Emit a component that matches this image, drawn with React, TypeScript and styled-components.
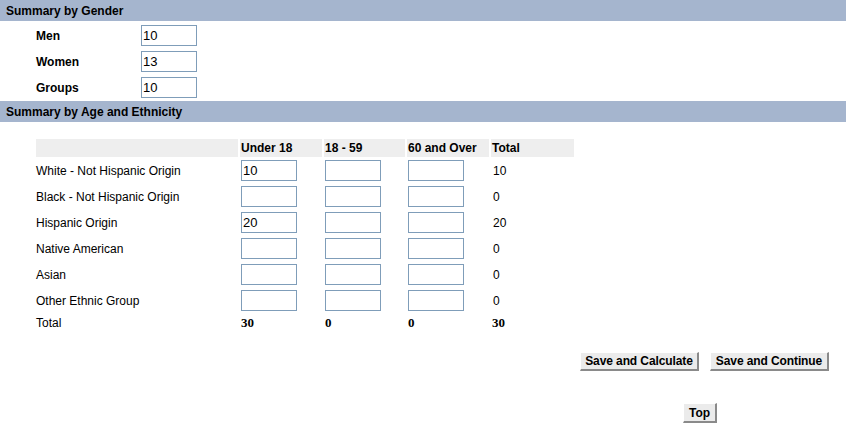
import React from 'react';
import styled, { createGlobalStyle } from 'styled-components';

const GlobalStyle = createGlobalStyle`
  html, body {
    margin: 0;
    padding: 0;
    background: #ffffff;
  }
  body {
    font-family: "Liberation Sans", Arial, sans-serif;
    font-size: 12px;
    color: #000000;
  }
`;

const Page = styled.div`
  width: 846px;
  display: flex;
  flex-direction: column;
`;

const SectionBar = styled.div`
  height: 21px;
  background: #a5b5ce;
  display: flex;
  align-items: center;
  padding-left: 6px;
  font-weight: bold;
  font-size: 12px;
`;

const GenderGrid = styled.div`
  display: grid;
  grid-template-columns: 105px 56px;
  row-gap: 5px;
  padding: 4px 0 3px 36px;
  align-items: center;
`;

const GenderLabel = styled.div`
  font-weight: bold;
`;

const NumberInput = styled.input`
  box-sizing: border-box;
  width: 56px;
  height: 21px;
  margin: 0;
  padding: 0 0 0 1px;
  border: 1px solid #7f9db9;
  background: #ffffff;
  font-family: "Liberation Sans", Arial, sans-serif;
  font-size: 13px;
  color: #000000;
  outline: none;
`;

const AgeGrid = styled.div`
  margin: 17px 0 0 36px;
  display: grid;
  grid-template-columns: 202px 82px 81px 82px 83px;
  grid-template-rows: 18px repeat(6, 24px) 16px;
  column-gap: 2px;
  row-gap: 2px;
  width: 538px;
`;

const HeadCell = styled.div`
  background: #eeeeee;
  font-weight: bold;
  display: flex;
  align-items: center;
  padding-left: 1px;
`;

const LabelCell = styled.div`
  display: flex;
  align-items: center;
`;

const InputCell = styled.div`
  padding: 1px 0 0 1px;
`;

const ValueCell = styled.div`
  display: flex;
  align-items: center;
  padding-left: 2px;
`;

const TotalLabel = styled.div`
  display: flex;
  align-items: center;
`;

const TotalValue = styled.div`
  display: flex;
  align-items: center;
  padding-left: 1px;
  font-family: "Liberation Serif", "Times New Roman", serif;
  font-weight: bold;
  font-size: 13px;
`;

const ButtonRow = styled.div<{ $right: number; $top: number }>`
  display: flex;
  justify-content: flex-end;
  gap: 11px;
  margin-top: ${({ $top }) => $top}px;
  padding-right: ${({ $right }) => $right}px;
`;

const Button = styled.button<{ $width: number; $height?: number }>`
  box-sizing: border-box;
  width: ${({ $width }) => $width}px;
  height: ${({ $height }) => $height ?? 19}px;
  margin: 0;
  padding: 0;
  white-space: nowrap;
  background: #ebebeb;
  border-top: 1px solid #ffffff;
  border-left: 1px solid #ffffff;
  border-right: 2px solid #8a8a8a;
  border-bottom: 2px solid #8a8a8a;
  font-family: "Liberation Sans", Arial, sans-serif;
  font-weight: bold;
  font-size: 12px;
  letter-spacing: -0.1px;
  line-height: 14px;
  color: #000000;
  cursor: pointer;
`;

const gender = [
  { label: 'Men', value: '10' },
  { label: 'Women', value: '13' },
  { label: 'Groups', value: '10' },
];

const groups = [
  { label: 'White - Not Hispanic Origin', values: ['10', '', ''], total: '10' },
  { label: 'Black - Not Hispanic Origin', values: ['', '', ''], total: '0' },
  { label: 'Hispanic Origin', values: ['20', '', ''], total: '20' },
  { label: 'Native American', values: ['', '', ''], total: '0' },
  { label: 'Asian', values: ['', '', ''], total: '0' },
  { label: 'Other Ethnic Group', values: ['', '', ''], total: '0' },
];

export default function App() {
  return (
    <Page>
      <GlobalStyle />
      <SectionBar>Summary by Gender</SectionBar>
      <GenderGrid>
        {gender.map((g) => (
          <React.Fragment key={g.label}>
            <GenderLabel>{g.label}</GenderLabel>
            <NumberInput defaultValue={g.value} />
          </React.Fragment>
        ))}
      </GenderGrid>
      <SectionBar>Summary by Age and Ethnicity</SectionBar>
      <AgeGrid>
        <HeadCell />
        <HeadCell>Under 18</HeadCell>
        <HeadCell>18 - 59</HeadCell>
        <HeadCell>60 and Over</HeadCell>
        <HeadCell>Total</HeadCell>
        {groups.map((row) => (
          <React.Fragment key={row.label}>
            <LabelCell>{row.label}</LabelCell>
            {row.values.map((v, i) => (
              <InputCell key={i}>
                <NumberInput defaultValue={v} />
              </InputCell>
            ))}
            <ValueCell>{row.total}</ValueCell>
          </React.Fragment>
        ))}
        <TotalLabel>Total</TotalLabel>
        <TotalValue>30</TotalValue>
        <TotalValue>0</TotalValue>
        <TotalValue>0</TotalValue>
        <TotalValue>30</TotalValue>
      </AgeGrid>
      <ButtonRow $right={17} $top={21}>
        <Button $width={119}>Save and Calculate</Button>
        <Button $width={119}>Save and Continue</Button>
      </ButtonRow>
      <ButtonRow $right={129} $top={32}>
        <Button $width={34} $height={20}>Top</Button>
      </ButtonRow>
    </Page>
  );
}
